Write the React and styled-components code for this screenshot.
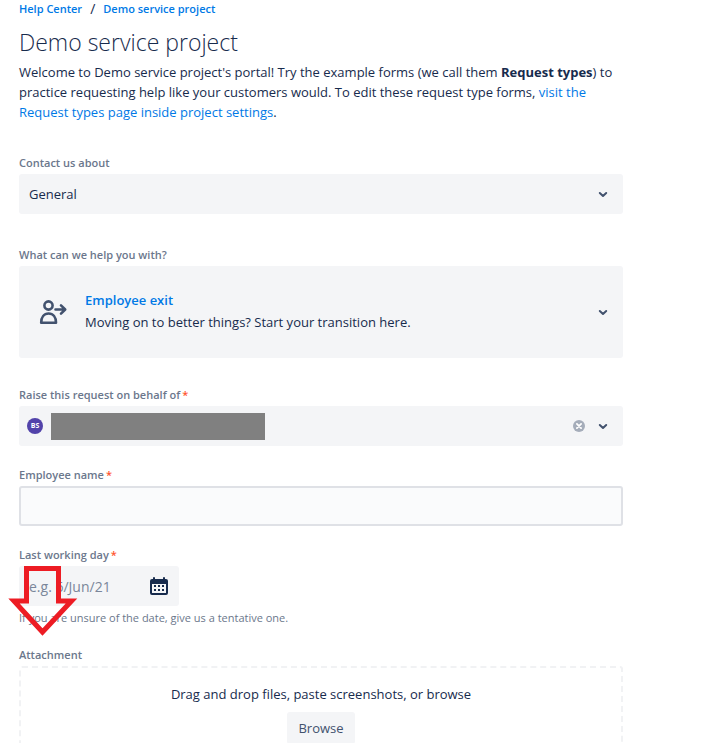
import { useState } from "react";
import styled, { createGlobalStyle } from "styled-components";

const GlobalStyle = createGlobalStyle`
  * {
    box-sizing: border-box;
  }

  body {
    margin: 0;
    background: #fff;
    color: #172b4d;
    font-family: "Open Sans", "Noto Sans", sans-serif;
    font-size: 13px;
    line-height: 20px;
  }

  a {
    color: #0079e6;
    text-decoration: none;

    &:hover {
      text-decoration: underline;
    }
  }

  button, input, select {
    font-family: inherit;
    font-size: 13px;
    color: inherit;
  }
`;

const Page = styled.main`
  position: relative;
  height: 100vh;
  padding: 0 104px 0 19px;
  overflow: hidden;
`;

const Breadcrumbs = styled.nav`
  display: flex;
  gap: 8px;
  height: 28px;
  font-size: 14px;
  line-height: 18px;

  a {
    font-size: 11px;
    font-weight: 600;
  }
`;

const Title = styled.h1`
  margin: 0 0 6px;
  font-size: 23px;
  font-weight: 300;
  line-height: 28px;
`;

const Intro = styled.p`
  margin: 0 0 33px;
`;

const Field = styled.div`
  margin-bottom: ${({ $gap }) => $gap || 21}px;
`;

const Label = styled.label`
  display: block;
  margin-bottom: 3px;
  color: #6b778c;
  font-size: 11px;
  font-weight: 600;
  line-height: 16px;
`;

const Required = styled.span`
  margin-left: 2px;
  color: #ff5630;
`;

const Control = styled.div`
  position: relative;
  display: flex;
  align-items: center;
  width: ${({ $short }) => ($short ? "160px" : "100%")};
  height: 40px;
  border-radius: 3px;
  background: #f4f5f7;
`;

const Select = styled.select`
  width: 100%;
  height: 100%;
  padding: 0 40px 0 10px;
  border: 0;
  border-radius: 3px;
  background: transparent;
  appearance: none;

  & + svg {
    position: absolute;
    right: 8px;
    pointer-events: none;
  }
`;

const RequestType = styled.button`
  display: flex;
  align-items: center;
  width: 100%;
  height: 92px;
  padding: 0 8px 0 18px;
  border: 0;
  border-radius: 3px;
  background: #f4f5f7;
  text-align: left;
  cursor: pointer;
`;

const RequestText = styled.span`
  display: flex;
  flex: 1;
  flex-direction: column;
  gap: 2px;
  margin-left: 16px;
  padding-bottom: 2px;
  line-height: 20px;

  strong {
    color: #0079e6;
    font-weight: 600;
  }
`;

const Avatar = styled.span`
  width: 16px;
  height: 16px;
  margin: 0 8px;
  border-radius: 50%;
  background: #5243aa;
  color: #fff;
  font-size: 7px;
  font-weight: 700;
  line-height: 16px;
  text-align: center;
`;

const HiddenName = styled.span`
  width: 214px;
  height: 27px;
  background: #808080;
`;

const IconButton = styled.button`
  display: flex;
  padding: 0;
  border: 0;
  background: none;
  cursor: pointer;
`;

const Actions = styled.span`
  display: flex;
  align-items: center;
  margin: 0 8px 0 auto;
`;

const TextInput = styled.input`
  display: block;
  width: 100%;
  height: 40px;
  padding: 8px;
  border: 2px solid #dfe1e6;
  border-radius: 3px;
  background: #fafbfc;
`;

const DateInput = styled.input`
  flex: 1;
  min-width: 0;
  height: 100%;
  padding: 0 0 0 10px;
  border: 0;
  background: none;
  font-size: 14px;

  &::placeholder {
    color: #7a869a;
    opacity: 1;
  }
`;

const Hint = styled.p`
  margin: 4px 0 0;
  color: #6b778c;
  font-size: 11px;
  line-height: 16px;
`;

const DropZone = styled.div`
  display: flex;
  flex-direction: column;
  align-items: center;
  gap: 8px;
  height: 120px;
  padding: 16px;
  border: 2px dashed #f1f2f4;
  border-radius: 3px;
`;

const BrowseButton = styled.button`
  height: 32px;
  padding: 0 11px;
  border: 0;
  border-radius: 3px;
  background: #f4f5f7;
  color: #42526e;
  cursor: pointer;
`;

const ArrowMark = styled.svg`
  position: absolute;
  top: 564px;
  left: 6px;
  pointer-events: none;
`;

const Chevron = () => (
  <svg width="24" height="24" viewBox="0 0 24 24" fill="none" aria-hidden="true">
    <path d="M8.8 11l3.2 3 3.2-3" stroke="#42526e" strokeWidth="2" strokeLinecap="round" strokeLinejoin="round" />
  </svg>
);

const ExitIcon = () => (
  <svg width="32" height="32" viewBox="0 0 32 32" fill="none" stroke="#42526e" strokeWidth="2.6" strokeLinejoin="round" aria-hidden="true">
    <circle cx="11.5" cy="9.5" r="4.1" />
    <path d="M4.2 26.7c0-5.6 2.8-9.2 7.4-9.2s7.4 3.6 7.4 9.2z" />
    <path d="M18.5 13.5H28M24 9.4l4.2 4.1-4.2 4.1" strokeLinecap="round" />
  </svg>
);

const ClearIcon = () => (
  <svg width="24" height="24" viewBox="0 0 24 24" aria-hidden="true">
    <circle cx="12" cy="12" r="6" fill="#a5adba" />
    <path d="M9.9 9.9l4.2 4.2M14.1 9.9l-4.2 4.2" stroke="#fff" strokeWidth="1.8" strokeLinecap="round" />
  </svg>
);

const CalendarIcon = () => (
  <svg width="24" height="24" viewBox="0 0 24 24" aria-hidden="true">
    <path
      fill="#172b4d"
      fillRule="evenodd"
      d="M5 5h1V4a1 1 0 012 0v1h8V4a1 1 0 012 0v1h1a2 2 0 012 2v12a2 2 0 01-2 2H5a2 2 0 01-2-2V7a2 2 0 012-2zm0 5v9h14v-9z"
    />
    <path
      fill="#172b4d"
      d="M7 11h2v2H7zm4 0h2v2h-2zm4 0h2v2h-2zM7 15h2v2H7zm4 0h2v2h-2zm4 0h2v2h-2z"
    />
  </svg>
);

const App = () => {
  const [name, setName] = useState("");
  const [day, setDay] = useState("");

  return (
    <>
      <GlobalStyle />
      <Page>
        <Breadcrumbs aria-label="Breadcrumbs">
          <a href="#help">Help Center</a>
          <span>/</span>
          <a href="#project">Demo service project</a>
        </Breadcrumbs>
        <Title>Demo service project</Title>
        <Intro>
          Welcome to Demo service project's portal! Try the example forms (we
          call them <b>Request types</b>) to practice requesting help like your
          customers would. To edit these request type forms,{" "}
          <a href="#settings">
            visit the Request types page inside project settings
          </a>
          .
        </Intro>

        <Field $gap={33}>
          <Label htmlFor="topic">Contact us about</Label>
          <Control>
            <Select id="topic" defaultValue="general">
              <option value="general">General</option>
            </Select>
            <Chevron />
          </Control>
        </Field>

        <Field $gap={29}>
          <Label htmlFor="request-type">What can we help you with?</Label>
          <RequestType id="request-type" type="button" aria-haspopup="listbox">
            <ExitIcon />
            <RequestText>
              <strong>Employee exit</strong>
              <span>Moving on to better things? Start your transition here.</span>
            </RequestText>
            <Chevron />
          </RequestType>
        </Field>

        <Field>
          <Label htmlFor="reporter">
            Raise this request on behalf of<Required>*</Required>
          </Label>
          <Control>
            <Avatar>BS</Avatar>
            <HiddenName />
            <Actions>
              <IconButton type="button" aria-label="Clear">
                <ClearIcon />
              </IconButton>
              <IconButton id="reporter" type="button" aria-haspopup="listbox">
                <Chevron />
              </IconButton>
            </Actions>
          </Control>
        </Field>

        <Field>
          <Label htmlFor="employee">
            Employee name<Required>*</Required>
          </Label>
          <TextInput
            id="employee"
            type="text"
            value={name}
            onChange={(e) => setName(e.target.value)}
            required
          />
        </Field>

        <Field>
          <Label htmlFor="last-day">
            Last working day<Required>*</Required>
          </Label>
          <Control $short>
            <DateInput
              id="last-day"
              type="text"
              placeholder="e.g. 6/Jun/21"
              value={day}
              onChange={(e) => setDay(e.target.value)}
              required
            />
            <Actions>
              <IconButton type="button" aria-label="Open calendar">
                <CalendarIcon />
              </IconButton>
            </Actions>
          </Control>
          <Hint>If you are unsure of the date, give us a tentative one.</Hint>
        </Field>

        <Field>
          <Label htmlFor="attachment">Attachment</Label>
          <DropZone>
            <span>Drag and drop files, paste screenshots, or browse</span>
            <BrowseButton id="attachment" type="button">
              Browse
            </BrowseButton>
          </DropZone>
        </Field>

        <ArrowMark width="74" height="76" viewBox="6 564 74 76" aria-hidden="true">
          <path
            d="M26.5 568.5h32V601h13L42.5 632 14 601h12.5z"
            fill="none"
            stroke="#ed1c24"
            strokeWidth="5"
          />
        </ArrowMark>
      </Page>
    </>
  );
};

export default App;
